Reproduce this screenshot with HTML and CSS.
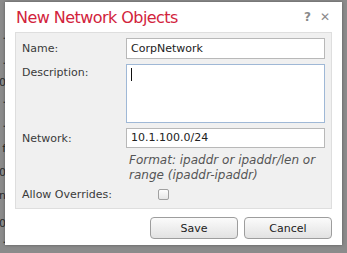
FILE: index.html
```html
<!DOCTYPE html>
<html>
<head>
<meta charset="utf-8">
<link rel="stylesheet" href="styles.css">
</head>
<body>
<div class="behind">
  <div class="frag" style="top:30px">.</div>
  <div class="frag" style="top:55px">.</div>
  <div class="frag" style="top:77px">0</div>
  <div class="frag" style="top:94px">.</div>
  <div class="frag" style="top:118px">.</div>
  <div class="frag" style="top:143px">f</div>
  <div class="frag" style="top:167px">0</div>
  <div class="frag" style="top:190px">n</div>
  <div class="frag" style="top:218px">0</div>
  <div class="frag" style="top:234px">.</div>
</div>
<div class="dialog">
  <div class="header">
    <div class="title">New Network Objects</div>
    <div class="tools"><span class="help">?</span><span class="close">&#x2715;</span></div>
  </div>
  <div class="panel">
    <div class="row">
      <label class="lbl">Name:</label>
      <div class="field input">CorpNetwork</div>
    </div>
    <div class="row">
      <label class="lbl lbl-top">Description:</label>
      <div class="field textarea focus"><span class="caret"></span></div>
    </div>
    <div class="row">
      <label class="lbl">Network:</label>
      <div class="field input net">10.1.100.0/24</div>
    </div>
    <div class="hint">Format: ipaddr or ipaddr/len or range (ipaddr-ipaddr)</div>
    <div class="row check-row">
      <label class="lbl">Allow Overrides:</label>
      <span class="checkbox"></span>
    </div>
  </div>
  <div class="footer">
    <button class="btn save">Save</button>
    <button class="btn">Cancel</button>
  </div>
</div>
</body>
</html>
```
FILE: styles.css
```css
html, body {
  margin: 0;
  padding: 0;
}
body {
  width: 347px;
  height: 253px;
  background: #8b8b8b;
  position: relative;
  overflow: hidden;
  font-family: "DejaVu Sans", Verdana, sans-serif;
}
.behind {
  position: absolute;
  left: 0;
  top: 0;
  width: 6px;
  height: 253px;
  overflow: hidden;
}
.frag {
  position: absolute;
  right: 0;
  font-size: 11px;
  color: #2a2a2a;
  line-height: 12px;
}
.dialog {
  position: absolute;
  left: 5px;
  top: 2px;
  width: 337px;
  height: 243px;
  background: #fff;
  box-shadow: 0 0 3px rgba(0,0,0,0.35);
  display: flex;
  flex-direction: column;
  box-sizing: border-box;
}
.header {
  height: 30px;
  display: flex;
  align-items: center;
  justify-content: space-between;
  padding: 0 12px 0 11px;
}
.title {
  color: #d2233c;
  font-size: 16px;
  font-family: "DejaVu Sans", Verdana, sans-serif;
  letter-spacing: -0.55px;
}
.tools {
  display: flex;
  gap: 9px;
  color: #8a8a8a;
  font-size: 12px;
  font-weight: bold;
}
.close {
  font-size: 12px;
}
.panel {
  margin: 0 10px;
  height: 177px;
  box-sizing: border-box;
  background: #f0f0f0;
  border: 1px solid #dedede;
  padding: 5px 6px 0 6px;
  display: flex;
  flex-direction: column;
  gap: 5px;
}
.row {
  display: flex;
  align-items: center;
}
.lbl {
  width: 104px;
  font-size: 11px;
  color: #3a3a3a;
  align-self: flex-start;
  padding-top: 4px;
}
.lbl-top {
  padding-top: 2px;
}
.field {
  width: 199px;
  box-sizing: border-box;
  background: #fff;
  border: 1px solid #b8b8b8;
  font-size: 11px;
  color: #222;
  padding: 0 4px;
}
.input {
  height: 21px;
  line-height: 19px;
}
.input.net {
  height: 20px;
  line-height: 18px;
}
.textarea {
  height: 59px;
  border-color: #9fb8d6;
  padding-top: 3px;
}
.caret {
  display: block;
  width: 1px;
  height: 13px;
  background: #111;
}
.hint {
  margin-left: 107px;
  margin-top: 0;
  font-size: 12px;
  font-style: italic;
  color: #555;
  line-height: 15px;
  width: 205px;
}
.check-row {
  margin-top: 0;
}
.check-row .lbl {
  width: 136px;
  padding-top: 0;
  line-height: 13px;
}
.checkbox {
  width: 11px;
  height: 11px;
  border: 1px solid #a0a0a0;
  border-radius: 2px;
  background: linear-gradient(#fdfdfd, #e6e6e6);
  box-sizing: border-box;
}
.footer {
  display: flex;
  justify-content: flex-end;
  gap: 6px;
  padding: 8px 10px 0 0;
}
.btn {
  width: 88px;
  height: 22px;
  border: 1px solid #9d9d9d;
  border-radius: 4px;
  background: linear-gradient(#fbfbfb, #e2e2e2);
  font-family: "DejaVu Sans", Verdana, sans-serif;
  font-size: 11px;
  color: #222;
  padding: 0;
}
.save {
  width: 88px;
}
```
